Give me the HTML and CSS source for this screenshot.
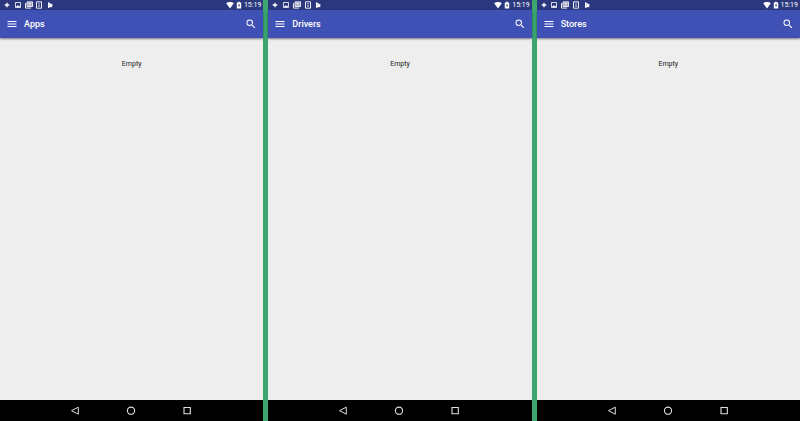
FILE: index.html
```html
<!DOCTYPE html>
<html lang="en">
<head>
<meta charset="utf-8">
<title>Apps, Drivers, Stores</title>
<link rel="stylesheet" href="styles.css">
</head>
<body>
<svg class="defs" aria-hidden="true">
  <symbol id="plus" viewBox="0 0 8 8"><path d="M4 1.700v4.600M1.700 4h4.600" fill="none" stroke="currentColor" stroke-width="1.300"/></symbol>
  <symbol id="image" viewBox="0 0 8 8"><path d="M1.500 1.500h5v5h-5z" fill="none" stroke="currentColor" stroke-width=".8"/><path d="M2 6l1.400-1.800.9 1 .8-1L6 6z" fill="currentColor"/></symbol>
  <symbol id="news" viewBox="0 0 8 8"><path d="M2 .9h5.600v4.600H2z" fill="currentColor" fill-opacity=".4" stroke="currentColor" stroke-width=".9"/><path d="M.5 2.200v4.900h5.600M3.200 2.300h3.200M3.200 3.900h3.200" fill="none" stroke="currentColor" stroke-width=".9"/></symbol>
  <symbol id="phone" viewBox="0 0 8 8"><path d="M1.500.8h5v6.400h-5z" fill="none" stroke="currentColor" stroke-width=".9"/><path d="M4 2v1M4 3.500v2.500" fill="none" stroke="currentColor" stroke-width=".9"/></symbol>
  <symbol id="play" viewBox="0 0 8 8"><path d="M2 1l5.200 3-1.400.8.700 1.500-1.700-.4L2 7z" fill="currentColor"/><path d="M3 3.500l.9.500-.9.500z" fill="#2c387e"/></symbol>
  <symbol id="wifi" viewBox="0 0 8 8"><path d="M.2 2.300C2.200.6 5.800.6 7.800 2.300L4 7.500z" fill="currentColor"/></symbol>
  <symbol id="battery" viewBox="0 0 8 8"><path d="M3.200.7h1.600v.7h1.400v6H1.800v-6h1.400z" fill="currentColor"/><path d="M4.300 2.300L3 4.600h.8v1.800l1.200-2.400h-.7z" fill="#2c387e"/></symbol>
  <symbol id="menu" viewBox="0 0 24 24"><path d="M3 18h18v-2H3v2zm0-5h18v-2H3v2zm0-7v2h18V6H3z" fill="currentColor"/></symbol>
  <symbol id="search" viewBox="0 0 24 24"><path d="M15.500 14h-.79l-.28-.27A6.471 6.471 0 0 0 16 9.500 6.500 6.500 0 1 0 9.500 16c1.610 0 3.090-.59 4.230-1.570l.27.28v.79l5 4.990L20.490 19l-4.990-5zm-6 0C7.010 14 5 11.990 5 9.500S7.010 5 9.500 5 14 7.010 14 9.500 11.990 14 9.500 14z" fill="currentColor"/></symbol>
  <symbol id="back" viewBox="0 0 10 10"><path d="M8.300 1.200v7L1.500 4.700z" fill="none" stroke="currentColor" stroke-width="1"/></symbol>
  <symbol id="home" viewBox="0 0 10 10"><circle cx="5" cy="4.700" r="3.600" fill="none" stroke="currentColor" stroke-width="1.100"/></symbol>
  <symbol id="recent" viewBox="0 0 10 10"><path d="M2 1.500h6.300v6.300H2z" fill="none" stroke="currentColor" stroke-width="1.100"/></symbol>
</svg>
<main class="screens">
  <section class="screen">
    <div class="status">
      <div class="notices"><svg><use href="#plus"/></svg><svg><use href="#image"/></svg><svg><use href="#news"/></svg><svg><use href="#phone"/></svg><svg><use href="#play"/></svg></div>
      <div class="system"><svg><use href="#wifi"/></svg><svg><use href="#battery"/></svg><time>15:19</time></div>
    </div>
    <header class="toolbar">
      <button aria-label="Menu"><svg><use href="#menu"/></svg></button>
      <h1>Apps</h1>
      <button aria-label="Search"><svg><use href="#search"/></svg></button>
    </header>
    <p class="content">Empty</p>
    <nav class="navbar">
      <button aria-label="Back"><svg><use href="#back"/></svg></button>
      <button aria-label="Home"><svg><use href="#home"/></svg></button>
      <button aria-label="Recent apps"><svg><use href="#recent"/></svg></button>
    </nav>
  </section>
  <section class="screen">
    <div class="status">
      <div class="notices"><svg><use href="#plus"/></svg><svg><use href="#image"/></svg><svg><use href="#news"/></svg><svg><use href="#phone"/></svg><svg><use href="#play"/></svg></div>
      <div class="system"><svg><use href="#wifi"/></svg><svg><use href="#battery"/></svg><time>15:19</time></div>
    </div>
    <header class="toolbar">
      <button aria-label="Menu"><svg><use href="#menu"/></svg></button>
      <h1>Drivers</h1>
      <button aria-label="Search"><svg><use href="#search"/></svg></button>
    </header>
    <p class="content">Empty</p>
    <nav class="navbar">
      <button aria-label="Back"><svg><use href="#back"/></svg></button>
      <button aria-label="Home"><svg><use href="#home"/></svg></button>
      <button aria-label="Recent apps"><svg><use href="#recent"/></svg></button>
    </nav>
  </section>
  <section class="screen">
    <div class="status">
      <div class="notices"><svg><use href="#plus"/></svg><svg><use href="#image"/></svg><svg><use href="#news"/></svg><svg><use href="#phone"/></svg><svg><use href="#play"/></svg></div>
      <div class="system"><svg><use href="#wifi"/></svg><svg><use href="#battery"/></svg><time>15:19</time></div>
    </div>
    <header class="toolbar">
      <button aria-label="Menu"><svg><use href="#menu"/></svg></button>
      <h1>Stores</h1>
      <button aria-label="Search"><svg><use href="#search"/></svg></button>
    </header>
    <p class="content">Empty</p>
    <nav class="navbar">
      <button aria-label="Back"><svg><use href="#back"/></svg></button>
      <button aria-label="Home"><svg><use href="#home"/></svg></button>
      <button aria-label="Recent apps"><svg><use href="#recent"/></svg></button>
    </nav>
  </section>
</main>
</body>
</html>
```

FILE: styles.css
```css
* {
  box-sizing: border-box;
}

body {
  margin: 0;
  font-family: Roboto, "Liberation Sans", sans-serif;
}

.defs {
  display: none;
}

.screens {
  display: flex;
  gap: 5px;
  min-height: 100vh;
  background: #3ba670;
}

.screen {
  flex: 1;
  display: flex;
  flex-direction: column;
  background: #eee;
}

.status {
  display: flex;
  align-items: center;
  justify-content: space-between;
  height: 10px;
  padding: 0 2px 0 3px;
  background: #2c387e;
  color: #fff;
}

.status svg {
  width: 8px;
  height: 8px;
}

.notices {
  display: flex;
  justify-content: space-between;
  width: 51px;
}

.system {
  display: flex;
  align-items: center;
  gap: 1px;
  font-size: 7px;
  line-height: 10px;
}

.toolbar {
  display: flex;
  align-items: center;
  gap: 6px;
  height: 28px;
  padding: 0 6px;
  background: #3f51b5;
  color: #fff;
  box-shadow: 0 1px 2px rgba(0, 0, 0, 0.5);
}

.toolbar h1 {
  flex: 1;
  margin: 0;
  font-size: 9px;
  line-height: 12px;
  font-weight: 500;
}

button {
  display: flex;
  padding: 0;
  border: 0;
  background: none;
  color: inherit;
}

.toolbar svg {
  width: 12px;
  height: 12px;
}

.content {
  flex: 1;
  margin: 0;
  padding-top: 20px;
  color: #222;
  font-size: 7px;
  line-height: 12px;
  text-align: center;
}

.navbar {
  display: flex;
  justify-content: center;
  gap: 46px;
  padding: 6px 1px 5px 0;
  background: #000;
  color: #e0e0e0;
}

.navbar svg {
  width: 10px;
  height: 10px;
}
```
